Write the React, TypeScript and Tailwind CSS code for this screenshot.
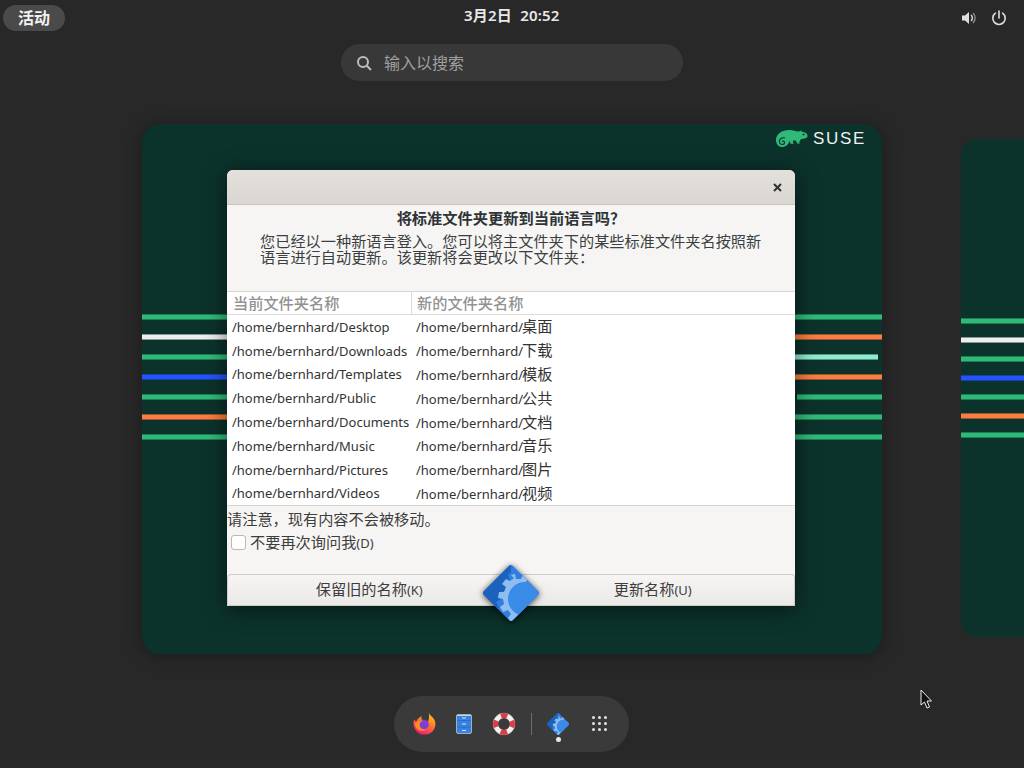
import React from "react";

const cjk = "font-['Noto_Sans','Noto_Sans_CJK_SC',sans-serif]";

const rows = [
  ["/home/bernhard/Desktop", "/home/bernhard/", "桌面"],
  ["/home/bernhard/Downloads", "/home/bernhard/", "下载"],
  ["/home/bernhard/Templates", "/home/bernhard/", "模板"],
  ["/home/bernhard/Public", "/home/bernhard/", "公共"],
  ["/home/bernhard/Documents", "/home/bernhard/", "文档"],
  ["/home/bernhard/Music", "/home/bernhard/", "音乐"],
  ["/home/bernhard/Pictures", "/home/bernhard/", "图片"],
  ["/home/bernhard/Videos", "/home/bernhard/", "视频"],
];

function Diamond({ size, id }: { size: number; id: string }) {
  return (
    <svg width={size} height={size} viewBox="0 0 60 60">
      <defs>
        <clipPath id={id}>
          <path d="M30 2 Q31 2 32 3 L57 28 Q59 30 57 32 L32 57 Q30 59 28 57 L3 32 Q1 30 3 28 L28 3 Q29 2 30 2Z" />
        </clipPath>
      </defs>
      <g clipPath={`url(#${id})`}>
        <rect width="60" height="60" fill="#2f7fe0" />
        <path d="M0 30 L30 0 L30 9 L27 12 L29 18 L24 21 L25 28 L19 29 L20 36 L15 39 L18 45 L14 46 Z" fill="#1a62bd" />
        <path d="M30 12 l4 -1 1 5 5 0 2 -4 5 3 -2 4 4 4 4 -2 3 5 L60 60 L30 60 L27 55 l3 -4 -3 -4 -5 2 -3 -5 4 -3 -1 -5 -5 -1 1 -6 5 0 2 -5 -4 -3 4 -5 4 2 4 -3Z" fill="#8fbdf2" />
        <circle cx="44" cy="36" r="17" fill="#3a8ae8" />
        <path d="M3 32 L28 57 L30 59 L57 32 L60 34 L30 62 L0 34Z" fill="#1d65c4" opacity="0.8" />
      </g>
    </svg>
  );
}

function Firefox() {
  return (
    <svg width="23" height="23" viewBox="0 0 24 24">
      <defs>
        <linearGradient id="ff" x1="0.8" y1="0" x2="0.3" y2="1">
          <stop offset="0" stopColor="#ffd21f" />
          <stop offset="0.45" stopColor="#ff7a2a" />
          <stop offset="1" stopColor="#f0167f" />
        </linearGradient>
      </defs>
      <path d="M16.5 0.5 C17 3.5 21 5 22.5 8.5 C24.5 13 23 18 19.5 21 C15.5 24.5 8 24.5 4 20.5 C0.5 17 -0.5 11 1.5 7.5 C2 9 2.5 9.5 3.5 10 C4.5 7.5 6.5 5 9.5 4.5 C8.5 6 8.5 7 9.5 8 C12.5 8 15 9 15 11 C17 8 17 4 16.5 0.5Z" fill="url(#ff)" />
      <circle cx="11.5" cy="13" r="5" fill="#7b3fd6" />
      <path d="M2 12 C5 9 9 8.5 11 9.5 C8 10 6.5 11.5 7 14 C7.5 17.5 11 19 14 18 C12 20 7 20.5 4 17.5 C2.8 16 2 14 2 12Z" fill="#ff8a1f" />
    </svg>
  );
}

function Files() {
  return (
    <svg width="16" height="20" viewBox="0 0 16 20">
      <rect x="0.5" y="0.5" width="15" height="19" rx="1.5" fill="#3584e4" stroke="#a6adb5" />
      <rect x="1" y="1" width="14" height="1" fill="#c8d4e2" />
      <path d="M1 6.5H15M1 13H15" stroke="#2a6fc4" />
      <path d="M6 4h4M6 10h4M6 16.5h4" stroke="#d7e3f2" strokeWidth="1.2" />
    </svg>
  );
}

function Lifebuoy() {
  return (
    <svg width="24" height="24" viewBox="0 0 24 24">
      <circle cx="12" cy="12" r="8.5" fill="none" stroke="#f3f1ee" strokeWidth="5" />
      <circle cx="12" cy="12" r="8.5" fill="none" stroke="#df3a45" strokeWidth="5" strokeDasharray="6.7 6.65" strokeDashoffset="3.35" transform="rotate(-90 12 12)" />
      <circle cx="12" cy="12" r="11" fill="none" stroke="#8d8d8d" strokeWidth="0.6" opacity="0.6" />
    </svg>
  );
}

function Suse() {
  return (
    <div className="flex items-start gap-[5px]">
      <svg width="32" height="17" viewBox="0 0 32 17">
        <path d="M0 10 C0 4 6 0 13 0 C18 0 20 2 23 1.5 L25 0.5 L26 1.8 C29 2 31.5 3.5 31.5 6 C31.5 8.5 28 8.8 25 9 L23 12.5 L24.5 13.5 L21 13.5 L20 10.5 L17 10.5 L17 13 L18.5 13.8 L14.5 13.8 L13.5 10.5 C13 14.5 9.5 17 6 17 C2.5 17 0 14 0 10Z" fill="#30ba78" />
        <path d="M6 11.5 C7 10.5 9 11.5 8.5 13 C8 15 4.5 15 3.5 12.5 C2.5 9.5 5.5 7 9 8" fill="none" stroke="#0c322c" strokeWidth="1.1" />
        <circle cx="27.5" cy="4.5" r="1" fill="#0c322c" />
      </svg>
      <span className="font-['Liberation_Sans',sans-serif] text-[17px] leading-[18px] tracking-[1.7px] text-[#eef1f0]">SUSE</span>
    </div>
  );
}

function Stripe({ cls }: { cls: string }) {
  return <div className={`absolute border-y border-[rgba(12,50,44,0.45)] ${cls}`} />;
}

export default function App() {
  return (
    <div className={`relative h-[768px] w-[1024px] overflow-hidden bg-[#282828] ${cjk}`}>
      {/* top bar */}
      <div className="flex h-[32px] items-center justify-between pl-[3px] pr-[17px] pt-[3px]">
        <div className="flex h-[26px] w-[62px] items-center justify-center rounded-full bg-[#4a4a4a] text-[16px] font-bold text-[#f2f2f2]">活动</div>
        <div className="absolute left-[464px] top-[5px] text-[15px] font-semibold leading-[20px] tracking-[0.2px] text-[#e8e8e8]">3月2日&nbsp; 20:52</div>
        <div className="flex items-center gap-[14px]">
          <svg width="15" height="16" viewBox="0 0 15 16">
            <path d="M0 5.5h3L7 2v12L3 10.5H0Z" fill="#dedede" />
            <path d="M9 5a4 4 0 0 1 0 6" fill="none" stroke="#dedede" strokeWidth="1.4" />
            <path d="M11 3a7 7 0 0 1 0 10" fill="none" stroke="#8c8c8c" strokeWidth="1.4" />
          </svg>
          <svg width="16" height="16" viewBox="0 0 16 16" fill="none" stroke="#dedede" strokeWidth="1.6" strokeLinecap="round">
            <path d="M8 1v7" />
            <path d="M4.4 3.2a6.2 6.2 0 1 0 7.2 0" />
          </svg>
        </div>
      </div>

      {/* search */}
      <div className="ml-[341px] mt-[12px] flex h-[37px] w-[342px] items-center gap-[12px] rounded-full bg-[#383838] pl-[15px] text-[16px] text-[#a0a0a0]">
        <svg width="16" height="16" viewBox="0 0 16 16" fill="none" stroke="#bdbdbd" strokeWidth="2">
          <circle cx="7" cy="7" r="5" />
          <path d="M10.8 10.8 15 15" />
        </svg>
        <span>输入以搜索</span>
      </div>

      {/* main workspace */}
      <div className="absolute left-[142px] top-[124px] h-[530px] w-[740px] overflow-hidden rounded-[18px] bg-[#0c322c] shadow-[0_2px_16px_rgba(0,0,0,0.35)]">
        <div className="absolute right-[16px] top-[6px]"><Suse /></div>
        <Stripe cls="left-0 right-0 top-[190px] h-[6px] bg-[#30ba78]" />
        <Stripe cls="left-0 w-[100px] top-[210px] h-[6px] bg-[#eeeeee]" />
        <Stripe cls="right-0 w-[87px] top-[210px] h-[6px] bg-[#fe7c3f]" />
        <Stripe cls="left-0 w-[100px] top-[230px] h-[6px] bg-[#30ba78]" />
        <Stripe cls="right-[4px] w-[83px] top-[230px] h-[6px] bg-[#90ebcd]" />
        <Stripe cls="left-0 w-[100px] top-[250px] h-[6px] bg-[#2453ff]" />
        <Stripe cls="right-0 w-[87px] top-[250px] h-[6px] bg-[#fe7c3f]" />
        <Stripe cls="left-0 w-[100px] top-[270px] h-[6px] bg-[#30ba78]" />
        <Stripe cls="right-0 w-[85px] top-[270px] h-[6px] bg-[#30ba78]" />
        <Stripe cls="right-0 w-[87px] top-[290px] h-[6px] bg-[#30ba78]" />
        <Stripe cls="left-0 w-[100px] top-[290px] h-[6px] bg-[#fe7c3f]" />
        <Stripe cls="left-0 right-0 top-[310px] h-[6px] bg-[#30ba78]" />
      </div>

      {/* neighbour workspace */}
      <div className="absolute left-[961px] top-[139px] h-[498px] w-[80px] overflow-hidden rounded-[16px] bg-[#0c322c]">
        <Stripe cls="left-0 right-0 top-[179px] h-[6px] bg-[#30ba78]" />
        <Stripe cls="left-0 right-0 top-[198px] h-[6px] bg-[#eeeeee]" />
        <Stripe cls="left-0 right-0 top-[217px] h-[6px] bg-[#30ba78]" />
        <Stripe cls="left-0 right-0 top-[236px] h-[6px] bg-[#2453ff]" />
        <Stripe cls="left-0 right-0 top-[255px] h-[6px] bg-[#30ba78]" />
        <Stripe cls="left-0 right-0 top-[274px] h-[6px] bg-[#fe7c3f]" />
        <Stripe cls="left-0 right-0 top-[293px] h-[6px] bg-[#30ba78]" />
      </div>

      {/* dialog */}
      <div className="absolute left-[227px] top-[170px] flex h-[436px] w-[568px] flex-col rounded-t-[6px] bg-[#f6f5f4] shadow-[0_3px_22px_rgba(0,0,0,0.55)]">
        <div className="flex h-[35px] shrink-0 items-center justify-end rounded-t-[6px] border-b border-[#c9c4bd] bg-gradient-to-b from-[#e4e1dd] to-[#dad7d2] pr-[12px]">
          <svg width="11" height="11" viewBox="0 0 11 11" stroke="#2e3436" strokeWidth="2">
            <path d="M2 2l7 7M9 2l-7 7" />
          </svg>
        </div>
        <div className="mt-[3px] text-center text-[15.25px] font-bold leading-[20px] text-[#2e3436]">将标准文件夹更新到当前语言吗？</div>
        <div className="mt-[5px] h-[58px] w-[545px] pl-[33px] text-[15.2px] leading-[16px] text-[#3a3f41]">
          您已经以一种新语言登入。您可以将主文件夹下的某些标准文件夹名按照新语言进行自动更新。该更新将会更改以下文件夹：
        </div>
        <div className="h-[215px] shrink-0 border-y border-[#d8d5d0] bg-white">
          <div className="flex h-[23px] border-b border-[#dedbd6] text-[15.2px] font-medium leading-[23px] text-[#929292]">
            <div className="w-[185px] border-r border-[#dedbd6] pl-[6px]">当前文件夹名称</div>
            <div className="pl-[5px]">新的文件夹名称</div>
          </div>
          {rows.map(([a, b, c]) => (
            <div key={a} className="flex h-[23.8px] items-center text-[13px] leading-[20px] text-[#333333]">
              <div className="w-[189px] whitespace-nowrap pl-[5px]">{a}</div>
              <div className="whitespace-nowrap">{b}<span className="-ml-px text-[15.2px]">{c}</span></div>
            </div>
          ))}
        </div>
        <div className="mt-[3px] text-[15.2px] leading-[20px] text-[#3d3d3d]">请注意，现有内容不会被移动。</div>
        <div className="ml-[4px] mt-[3px] flex items-center gap-[4px] text-[15.2px] leading-[20px] text-[#3d3d3d]">
          <div className="h-[15px] w-[15px] rounded-[3px] border border-[#bcb8b2] bg-white" />
          <span>不要再次询问我<span className="text-[13px]">(D)</span></span>
        </div>
        <div className="mt-auto flex h-[32px] text-[15.2px] text-[#3d3d3d]">
          <div className="flex flex-1 items-center justify-center rounded-tl-[4px] border border-[#d0ccc6] bg-gradient-to-b from-[#f6f5f4] to-[#ebe9e6] pb-[2px]">
            <span>保留旧的名称<span className="text-[13px]">(K)</span></span>
          </div>
          <div className="flex flex-1 items-center justify-center rounded-tr-[4px] border border-l-0 border-[#d0ccc6] bg-gradient-to-b from-[#f6f5f4] to-[#ebe9e6] pb-[2px]">
            <span>更新名称<span className="text-[13px]">(U)</span></span>
          </div>
        </div>
      </div>

      {/* window app icon */}
      <div className="absolute left-[481px] top-[563px] drop-shadow-[0_1px_3px_rgba(0,0,0,0.7)]">
        <Diamond size={60} id="d1" />
      </div>

      {/* dock */}
      <div className="absolute left-[394px] top-[696px] flex h-[56px] w-[235px] items-center rounded-[28px] bg-[#3a3a3a] pl-[10px]">
        <div className="mb-[2px] flex w-[40px] justify-center"><Firefox /></div>
        <div className="flex w-[40px] justify-center"><Files /></div>
        <div className="flex w-[40px] justify-center"><Lifebuoy /></div>
        <div className="ml-[7px] h-[22px] w-px bg-[#6c6c6c]" />
        <div className="relative ml-[6px] flex w-[40px] justify-center">
          <Diamond size={24} id="d2" />
          <div className="absolute left-[17.5px] top-[25px] h-[5px] w-[5px] rounded-full bg-[#e8e8e8]" />
        </div>
        <div className="mb-[2px] ml-[1px] grid w-[40px] grid-cols-[3px_3px_3px] justify-center gap-[3px]">
          {Array.from({ length: 9 }).map((_, i) => (
            <div key={i} className="h-[3px] w-[3px] rounded-full bg-[#e4e4e4]" />
          ))}
        </div>
      </div>

      {/* cursor */}
      <svg className="absolute left-[920px] top-[689px]" width="13" height="21" viewBox="0 0 13 21">
        <path d="M1 1 L1 16 L4.5 13 L7 19 L9.5 18 L7 12 L11.5 12 Z" fill="#111" stroke="#eee" strokeWidth="1" />
      </svg>
    </div>
  );
}
